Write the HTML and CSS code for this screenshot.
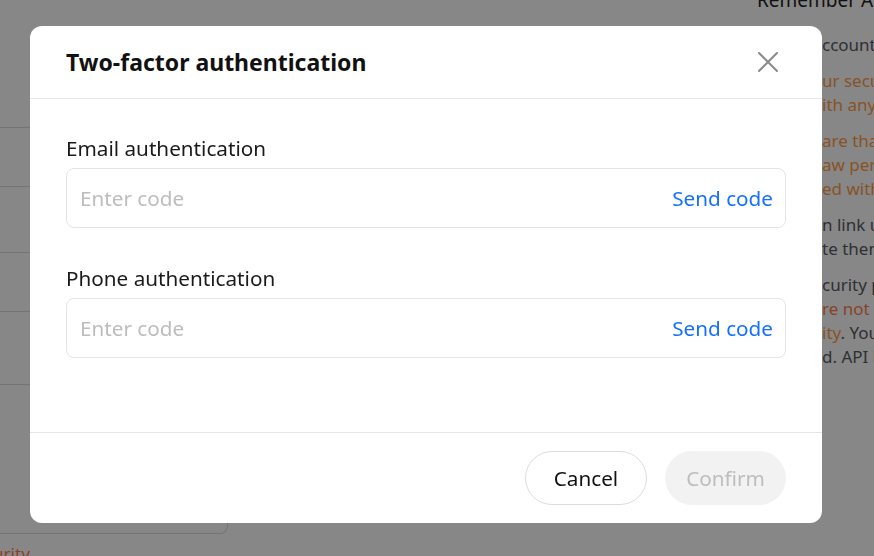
FILE: index.html
```html
<!DOCTYPE html>
<html lang="en">
<head>
<meta charset="utf-8">
<title>Two-factor authentication</title>
<link rel="stylesheet" href="styles.css">
</head>
<body>
<div class="page">
  <div class="left">
    <div class="card">
      <div class="row r1"></div>
      <div class="row r2"></div>
      <div class="row r3"></div>
      <div class="row r4"></div>
      <div class="row r5"></div>
    </div>
    <div class="sec">Security</div>
  </div>
  <div class="right">
    <div class="rh">Remember API key</div>
    <p class="para"><span class="ln"><span class="pre">Your a</span>ccount</span></p>
    <p class="para warn"><span class="ln"><span class="pre">Keep yo</span>ur security key</span><span class="ln"><span class="pre">Do not share w</span>ith anyone</span></p>
    <p class="para warn"><span class="ln"><span class="pre">Please be aw</span>are that</span><span class="ln"><span class="pre">withdr</span>aw permission</span><span class="ln"><span class="pre">associat</span>ed with it</span></p>
    <p class="para"><span class="ln"><span class="pre">The mai</span>n link used</span><span class="ln"><span class="pre">dele</span>te them</span></p>
    <p class="para"><span class="ln"><span class="pre">For se</span>curity purposes</span><span class="ln red"><span class="pre">We a</span>re not bound</span><span class="ln"><span class="pre">secur</span><span class="warn">ity</span>. You</span><span class="ln"><span class="pre">define</span>d. API key</span></p>
  </div>
</div>

<div class="overlay"></div>

<div class="modal">
  <div class="modal-head">
    <h2 class="modal-title">Two-factor authentication</h2>
    <button class="close" aria-label="Close">
      <svg width="22" height="22" viewBox="0 0 22 22"><path d="M2 2L20 20M20 2L2 20" stroke="#8a8a8a" stroke-width="2" stroke-linecap="round" fill="none"/></svg>
    </button>
  </div>
  <div class="modal-body">
    <div class="field">
      <label class="label">Email authentication</label>
      <div class="input">
        <span class="ph">Enter code</span>
        <span class="send">Send code</span>
      </div>
    </div>
    <div class="field">
      <label class="label">Phone authentication</label>
      <div class="input">
        <span class="ph">Enter code</span>
        <span class="send">Send code</span>
      </div>
    </div>
  </div>
  <div class="modal-foot">
    <button class="btn cancel">Cancel</button>
    <button class="btn confirm">Confirm</button>
  </div>
</div>
</body>
</html>
```

FILE: styles.css
```css
* { box-sizing: border-box; }
html, body { margin: 0; padding: 0; }
body {
  width: 874px;
  height: 556px;
  overflow: hidden;
  background: #fff;
  font-family: "Noto Sans", "Open Sans", sans-serif;
  color: #222;
}
.page {
  display: flex;
  justify-content: space-between;
  height: 556px;
}
.left {
  width: 228px;
  display: flex;
  flex-direction: column;
}
.card {
  flex-shrink: 0;
  margin-top: 61px;
  height: 473px;
  border: 1px solid #d9d9d9;
  border-left: none;
  border-top: none;
  border-radius: 0 0 8px 0;
  display: flex;
  flex-direction: column;
}
.row { border-bottom: 1px solid #dcdcdc; flex-shrink: 0; }
.r1 { height: 67px; }
.r2 { height: 59px; }
.r3 { height: 66px; }
.r4 { height: 59px; }
.r5 { height: 73px; }
.sec {
  flex-shrink: 0;
  margin-top: 8px;
  margin-left: -34px;
  color: #ff7f4a;
  font-size: 17px;
  line-height: 24px;
}
.right {
  width: 117px;
  white-space: nowrap;
  overflow: hidden;
  font-size: 17px;
  line-height: 24px;
  color: #5a5a66;
}
.rh {
  font-size: 19px;
  line-height: 20px;
  margin-top: -10px;
  color: #222;
}
.para {
  margin: 0 0 12px;
  display: flex;
  flex-direction: column;
}
.para:first-of-type { margin-top: 23px; }
.ln { display: block; }
.pre {
  display: inline-block;
  width: 65px;
  overflow: hidden;
  vertical-align: top;
}
.warn { color: #ff9d48; }
.red { color: #ff7f4a; }

.overlay {
  position: fixed;
  inset: 0;
  background: rgba(0,0,0,0.47);
}
.modal {
  position: fixed;
  left: 30px;
  top: 26px;
  width: 792px;
  height: 497px;
  background: #fff;
  border-radius: 12px;
  display: flex;
  flex-direction: column;
}
.modal-head {
  height: 73px;
  padding: 0 36px;
  border-bottom: 1px solid #e6e6e6;
  display: flex;
  align-items: center;
  justify-content: space-between;
}
.modal-title {
  margin: 0;
  font-size: 23px;
  font-weight: 700;
  color: #111;
}
.close {
  border: none;
  background: none;
  padding: 0;
  width: 22px;
  height: 22px;
  margin-right: 7px;
  display: flex;
}
.modal-body {
  flex: 1;
  padding: 36px 36px 0;
  border-bottom: 1px solid #e6e6e6;
  display: flex;
  flex-direction: column;
  gap: 37px;
}
.field {
  display: flex;
  flex-direction: column;
  gap: 7px;
}
.label {
  font-size: 20.7px;
  line-height: 26px;
  color: #1a1a1a;
}
.input {
  height: 60px;
  border: 1px solid #e4e4e4;
  border-radius: 8px;
  padding: 0 12px 0 13px;
  display: flex;
  align-items: center;
  justify-content: space-between;
  font-size: 20.7px;
}
.ph { color: #bdbdbd; }
.send { color: #1570ff; }
.modal-foot {
  height: 90px;
  padding: 0 36px;
  display: flex;
  align-items: center;
  justify-content: flex-end;
  gap: 18px;
}
.btn {
  height: 54px;
  border-radius: 27px;
  font-family: inherit;
  font-size: 20.7px;
  padding: 0;
}
.cancel {
  width: 122px;
  background: #fff;
  border: 1px solid #dcdcdc;
  color: #111;
}
.confirm {
  width: 121px;
  background: #f2f2f2;
  border: none;
  color: #bdbdbd;
}
```
